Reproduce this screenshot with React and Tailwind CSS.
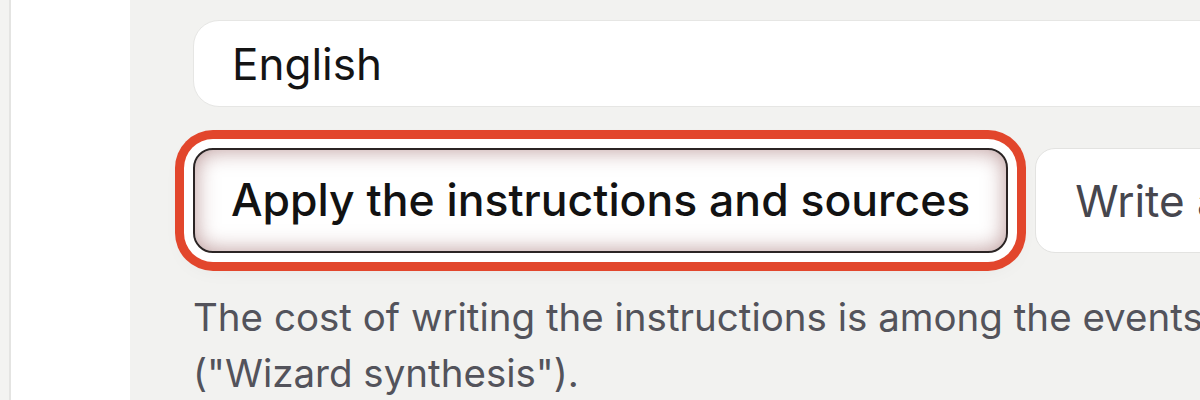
import React from 'react';

export default function App() {
  return (
    <div className="flex h-[400px] w-[1200px] overflow-hidden bg-[#f3f3f1] font-['Inter',sans-serif]">
      {/* left rail */}
      <div className="w-[11px] shrink-0 border-r-2 border-[#e4e4e2] bg-[#f3f3f1]" />
      <div className="w-[119px] shrink-0 bg-white" />

      {/* main column */}
      <div className="flex-1 overflow-hidden bg-[#f2f2f0] pl-[63px] pt-[20px]">
        <div className="w-[1400px]">
          <div className="flex h-[87px] items-center rounded-[26px] border border-[#e6e6e4] bg-white pl-[38px] text-[44px] text-[#141414]">
            English
          </div>

          <div className="mt-[41px] flex gap-[27px]">
            <button className="h-[105px] shrink-0 whitespace-nowrap rounded-[20px] border-2 border-[#2b2424] bg-white px-[36px] text-[44.5px] font-medium text-[#121212] shadow-[inset_0_0_22px_rgba(140,80,80,0.6),0_0_0_9px_#ffffff,0_0_0_18px_#e2462c,0_6px_28px_rgba(0,0,0,0.14)]">
              Apply the instructions and sources
            </button>
            <button className="h-[105px] shrink-0 whitespace-nowrap rounded-[20px] border border-[#e3e3e1] bg-white px-[39px] text-[44px] text-[#46464e]">
              Write a new set of instructions
            </button>
          </div>

          <p className="mt-[36px] text-[38.5px] leading-[56px] text-[#53535b]">
            <span className="block whitespace-nowrap">
              The cost of writing the instructions is among the events billed
            </span>
            <span className="block whitespace-nowrap">("Wizard synthesis").</span>
          </p>
        </div>
      </div>
    </div>
  );
}
